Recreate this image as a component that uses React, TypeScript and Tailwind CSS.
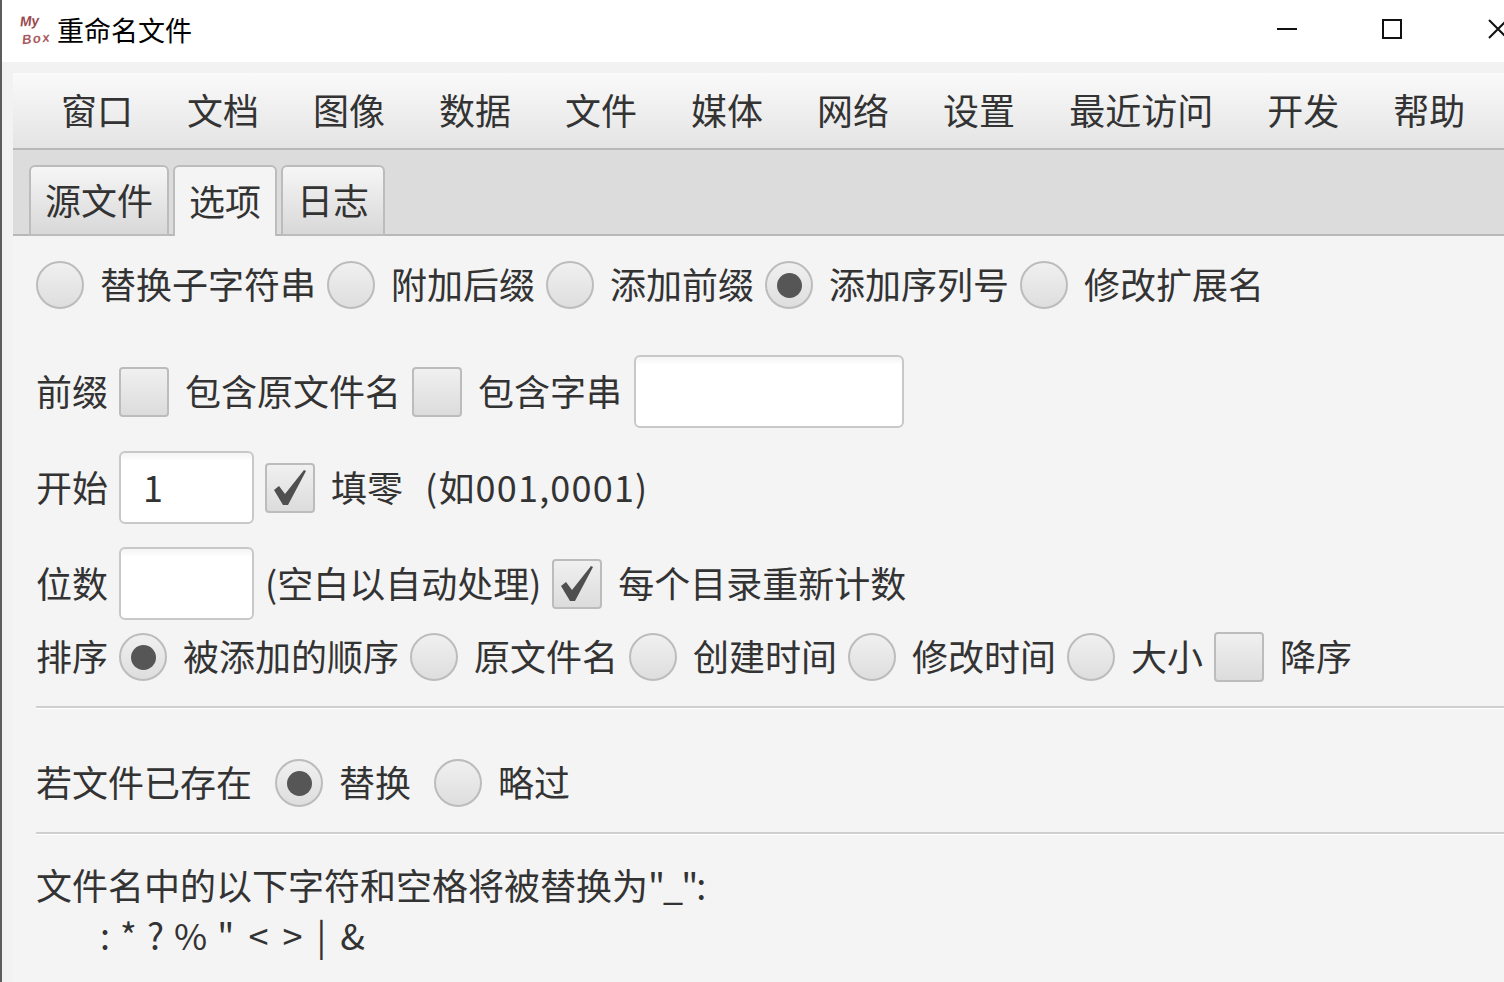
const menus = ['窗口', '文档', '图像', '数据', '文件', '媒体', '网络', '设置', '最近访问', '开发', '帮助'];

function T({ children }: { children: React.ReactNode }) {
  return <span className="whitespace-nowrap pb-[4px]">{children}</span>;
}

function Radio({ checked = false }: { checked?: boolean }) {
  return (
    <span className="flex h-[48px] w-[48px] shrink-0 items-center justify-center rounded-full border-2 border-[#bcbcbc] bg-gradient-to-b from-[#f0f0f0] to-[#dedede]">
      {checked && <span className="h-[25px] w-[25px] rounded-full bg-[#565656]" />}
    </span>
  );
}

function Check({ checked = false }: { checked?: boolean }) {
  return (
    <span className="flex h-[50px] w-[50px] shrink-0 items-center justify-center rounded-[4px] border-2 border-[#bcbcbc] bg-gradient-to-b from-[#f0f0f0] to-[#dcdcdc]">
      {checked && (
        <svg width="34" height="38" viewBox="0 0 34 38">
          <path d="M1 21 L6 17 L12 25 L31 1 L33 2 L15 36 L10 36 Z" fill="#4f4f4f" />
        </svg>
      )}
    </span>
  );
}

function Field({ value, width }: { value?: string; width: string }) {
  return (
    <span className={`flex h-[73px] ${width} shrink-0 items-center rounded-[6px] border-2 border-[#c8c8c8] bg-gradient-to-b from-[#f4f4f4] via-white via-[12%] to-white pl-[22px] pb-[4px]`}>
      {value}
    </span>
  );
}

function Opt({ control, label }: { control: React.ReactNode; label: React.ReactNode }) {
  return (
    <span className="flex items-center gap-4 whitespace-nowrap">
      {control}
      <T>{label}</T>
    </span>
  );
}

function Rule() {
  return <div className="ml-[36px] h-[3px] border-t-2 border-[#cfcfcf] bg-white" />;
}

export default function App() {
  return (
    <div
      className="h-[982px] w-[1504px] overflow-hidden bg-[#f2f2f2] border-l-2 border-[#5c5c5c] text-[36px] leading-[44px] text-[#333]"
      style={{ fontFamily: '"Noto Sans CJK SC", "Liberation Sans", sans-serif' }}
    >
      {/* title bar */}
      <div className="flex h-[62px] items-center bg-white pl-[17px]">
        <svg width="34" height="34" viewBox="0 0 34 34" className="mt-[-3px] shrink-0">
          <text x="1" y="13" fontSize="14" fontStyle="italic" fontWeight="700" fill="#9a4a50" fontFamily="Liberation Sans, sans-serif" transform="rotate(-4 10 10)">My</text>
          <text x="3" y="30" fontSize="13" fontStyle="italic" fontWeight="700" fill="#a85a60" letterSpacing="1.5" fontFamily="Liberation Sans, sans-serif" transform="rotate(-6 16 26)">Box</text>
        </svg>
        <span className="ml-[4px] shrink-0 whitespace-nowrap pb-[4px] text-[27px] leading-none text-black">重命名文件</span>
        <svg width="20" height="20" viewBox="0 0 20 20" className="ml-[1085px] mt-[-4px] shrink-0">
          <rect x="0" y="9" width="20" height="2" fill="#111" />
        </svg>
        <svg width="20" height="20" viewBox="0 0 20 20" className="ml-[85px] mt-[-4px] shrink-0">
          <rect x="1" y="1" width="18" height="18" fill="none" stroke="#111" strokeWidth="2" />
        </svg>
        <svg width="20" height="20" viewBox="0 0 20 20" className="ml-[86px] mt-[-4px] shrink-0">
          <path d="M1 1 L19 19 M19 1 L1 19" stroke="#111" strokeWidth="2" />
        </svg>
      </div>

      <div className="ml-[11px] mt-[11px]">
        {/* menu bar */}
        <div className="flex h-[77px] items-center gap-[54px] border-b-2 border-[#b8b8b8] bg-gradient-to-b from-[#fafafa] to-[#e4e4e4] pl-[48px]">
          {menus.map((m) => (
            <T key={m}>{m}</T>
          ))}
        </div>

        {/* tabs */}
        <div className="flex h-[86px] items-end gap-[4px] border-b-2 border-[#b8b8b8] bg-[#dcdcdc] pl-[16px]">
          <div className="mb-[-2px] flex h-[71px] items-center rounded-t-[6px] border-2 border-[#bcbcbc] bg-gradient-to-b from-[#f6f6f6] to-[#d8d8d8] px-[14px]"><T>源文件</T></div>
          <div className="mb-[-2px] flex h-[71px] items-center rounded-t-[6px] border-2 border-b-0 border-[#bcbcbc] bg-[#f4f4f4] px-[14px]"><T>选项</T></div>
          <div className="mb-[-2px] flex h-[71px] items-center rounded-t-[6px] border-2 border-[#bcbcbc] bg-gradient-to-b from-[#f6f6f6] to-[#d8d8d8] px-[14px]"><T>日志</T></div>
        </div>
      </div>

      {/* options */}
      <div className="ml-[11px] h-full bg-[#f4f4f4] pt-[25px]">
        <div className="flex items-center gap-[11px] pl-[23px]">
          <Opt control={<Radio />} label="替换子字符串" />
          <Opt control={<Radio />} label="附加后缀" />
          <Opt control={<Radio />} label="添加前缀" />
          <Opt control={<Radio checked />} label="添加序列号" />
          <Opt control={<Radio />} label="修改扩展名" />
        </div>

        <div className="mt-[46px] flex items-center gap-[11px] pl-[23px]">
          <T>前缀</T>
          <Opt control={<Check />} label="包含原文件名" />
          <Opt control={<Check />} label="包含字串" />
          <span className="ml-px"><Field width="w-[270px]" /></span>
        </div>

        <div className="mt-[23px] flex items-center gap-[11px] pl-[23px]">
          <T>开始</T>
          <Field width="w-[135px]" value="1" />
          <Opt
            control={<Check checked />}
            label={<>填零<span className="ml-[22px] tracking-[1.2px]">(如001,0001)</span></>}
          />
        </div>

        <div className="mt-[23px] flex items-center gap-[11px] pl-[23px]">
          <T>位数</T>
          <Field width="w-[135px]" />
          <T>(空白以自动处理)</T>
          <Opt control={<Check checked />} label="每个目录重新计数" />
        </div>

        <div className="mt-[12px] flex items-center gap-[11px] pl-[23px]">
          <T>排序</T>
          <Opt control={<Radio checked />} label="被添加的顺序" />
          <Opt control={<Radio />} label="原文件名" />
          <Opt control={<Radio />} label="创建时间" />
          <Opt control={<Radio />} label="修改时间" />
          <Opt control={<Radio />} label="大小" />
          <Opt control={<Check />} label="降序" />
        </div>

        <div className="-ml-[13px] mt-[24px]"><Rule /></div>

        <div className="mt-[50px] flex items-center gap-[23px] pl-[23px]">
          <T>若文件已存在</T>
          <Opt control={<Radio checked />} label="替换" />
          <Opt control={<Radio />} label="略过" />
        </div>

        <div className="-ml-[13px] mt-[25px]"><Rule /></div>

        <div className="mt-[24px] pl-[23px] leading-[50px]">
          <div>文件名中的以下字符和空格将被替换为<span className="tracking-[-2px]">"_":</span></div>
          <div className="pl-[64px] [word-spacing:2px]">: * ? % "<span className="[word-spacing:6px]"> &lt; &gt; | &amp;</span></div>
        </div>
      </div>
    </div>
  );
}
